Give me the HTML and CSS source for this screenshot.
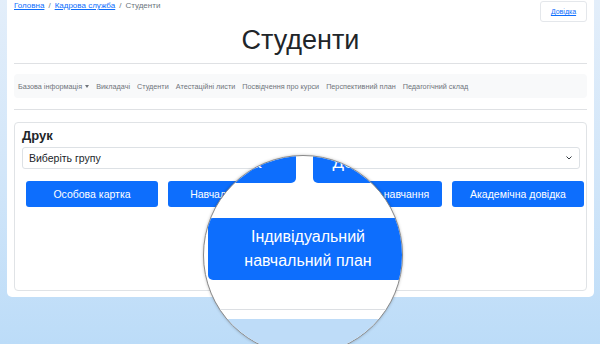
FILE: index.html
```html
<!DOCTYPE html>
<html lang="uk">
<head>
<meta charset="utf-8">
<title>Студенти</title>
<link rel="stylesheet" href="styles.css">
</head>
<body>
<div class="page">
  <div class="topbar">
    <nav class="crumbs"><a href="#">Головна</a><span class="sep">/</span><a href="#">Кадрова служба</a><span class="sep">/</span><span class="cur">Студенти</span></nav>
    <a class="help" href="#">Довідка</a>
  </div>
  <h1 class="title">Студенти</h1>
  <hr class="rule">
  <nav class="menu">
    <span class="item">Базова інформація<span class="caret"></span></span>
    <span class="item">Викладачі</span>
    <span class="item">Студенти</span>
    <span class="item">Атестаційні листи</span>
    <span class="item">Посвідчення про курси</span>
    <span class="item">Перспективний план</span>
    <span class="item">Педагогічний склад</span>
  </nav>
  <hr class="rule rule-low">
  <section class="card">
    <h5 class="card-title">Друк</h5>
    <div class="select"><span>Виберіть групу</span><svg class="chev" width="6" height="4" viewBox="0 0 6 4"><path d="M0.5 0.5 L3 3 L5.5 0.5" fill="none" stroke="#343a40" stroke-width="1"/></svg></div>
    <div class="btns">
      <button class="btn">Особова картка</button>
      <button class="btn">Навчальна картка</button>
      <button class="btn">Довідка про навчання</button>
      <button class="btn">Академічна довідка</button>
    </div>
  </section>
</div>
<div class="lens">
  <div class="lens-row">
    <button class="lbtn">Навчальна картка</button>
    <button class="lbtn">Довідка про навчання</button>
  </div>
  <button class="lens-big">Індивідуальний<br>навчальний план</button>
  <div class="lens-card"></div>
  <div class="lens-outer"></div>
  <div class="lens-bg"></div>
</div>
</body>
</html>
```
FILE: styles.css
```css
html, body {
  margin: 0;
  height: 344px;
  overflow: hidden;
}
body {
  position: relative;
  background: linear-gradient(180deg, #e3eefa 0%, #d2e6f9 50%, #bcdcf8 100%);
  font-family: "Liberation Sans", Arial, sans-serif;
  color: #212529;
}
.page {
  box-sizing: border-box;
  margin: 0 6px 0 7px;
  height: 297px;
  padding: 1px 7px 0 7px;
  background: #fff;
  border-radius: 0 0 5px 5px;
}
.topbar {
  display: flex;
  justify-content: space-between;
  align-items: flex-start;
  height: 21px;
}
.crumbs {
  font-size: 8px;
  line-height: 10px;
  color: #6c757d;
}
.crumbs a {
  color: #0d6efd;
  text-decoration: underline;
}
.crumbs .sep {
  margin: 0 4px;
  color: #6c757d;
}
.help {
  box-sizing: border-box;
  width: 47px;
  height: 21px;
  display: flex;
  align-items: center;
  justify-content: center;
  border: 1px solid #e4e7eb;
  border-radius: 3px;
  font-size: 7px;
  color: #0d6efd;
  text-decoration: underline;
}
.title {
  margin: 2px 0 0;
  font-size: 27px;
  line-height: 32px;
  font-weight: 400;
  text-align: center;
  color: #212529;
}
.rule {
  border: 0;
  border-top: 1px solid #dfe1e4;
  margin: 7px 0 10px;
}
.rule-low {
  margin: 11px 0 12px;
}
.menu {
  display: flex;
  align-items: center;
  gap: 7px;
  height: 24px;
  padding: 0 4px;
  background: #f8f9fa;
  border-radius: 4px;
  font-size: 7.25px;
  color: #6f747a;
}
.caret {
  display: inline-block;
  margin-left: 3px;
  vertical-align: 1px;
  border-top: 3px solid #6f747a;
  border-left: 2.5px solid transparent;
  border-right: 2.5px solid transparent;
}
.card {
  box-sizing: border-box;
  height: 169px;
  border: 1px solid #e0e3e6;
  border-radius: 4px;
  padding: 5px 6px 0 7px;
}
.card-title {
  margin: 0 0 3px;
  font-size: 13px;
  line-height: 16px;
  font-weight: 700;
  color: #212529;
}
.select {
  box-sizing: border-box;
  height: 22px;
  display: flex;
  align-items: center;
  justify-content: space-between;
  padding: 0 7px 0 6px;
  border: 1px solid #dde1e5;
  border-radius: 3px;
  font-size: 10.5px;
}
.btns {
  display: grid;
  grid-template-columns: repeat(4, 1fr);
  gap: 10px;
  margin: 12px -4px 0 4px;
}
.btn {
  height: 26px;
  border: 0;
  border-radius: 3px;
  background: #0d6efd;
  color: #fff;
  font-family: inherit;
  font-size: 10.5px;
  padding: 0;
}
.lens {
  position: absolute;
  left: 203px;
  top: 155px;
  width: 200px;
  height: 200px;
  box-sizing: border-box;
  border: 1px solid #8a8a8a;
  border-radius: 50%;
  overflow: hidden;
  background: #fff;
  box-shadow: 0 0 3px rgba(0, 0, 0, 0.25);
}
.lens-row {
  display: flex;
  gap: 17px;
  margin: -8px 0 0 -119px;
}
.lbtn {
  flex: 0 0 211px;
  height: 35px;
  border: 0;
  border-radius: 5px;
  background: #0d6efd;
  color: #fff;
  font-family: inherit;
  font-size: 17px;
  padding: 0 0 6px;
}
.lens-big {
  display: block;
  width: 200px;
  height: 62px;
  margin: 35px 0 0 4px;
  border: 0;
  border-radius: 5px;
  background: #0d6efd;
  color: #fff;
  font-family: inherit;
  font-size: 16px;
  line-height: 24px;
  padding: 0;
}
.lens-card {
  height: 29px;
  border-bottom: 1px solid #dcdfe3;
}
.lens-outer {
  height: 9px;
}
.lens-bg {
  height: 60px;
  background: #bedcf8;
}
```
